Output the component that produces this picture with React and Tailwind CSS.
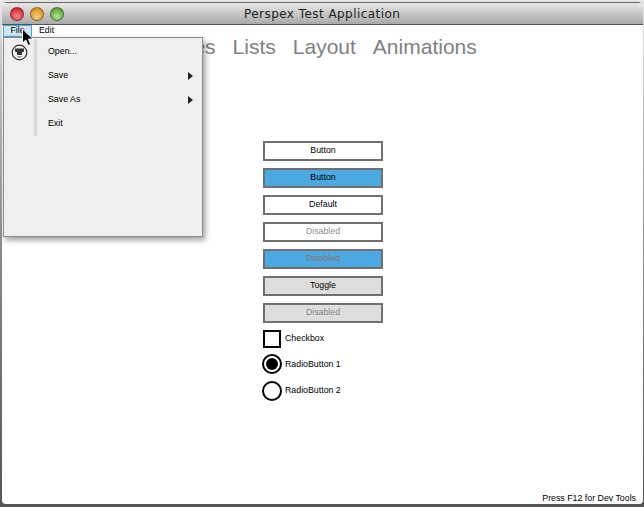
import React from 'react';

const sans = 'font-["Liberation_Sans",Arial,sans-serif]';

const tabs = [
  { label: 'Buttons' },
  { label: 'Text' },
  { label: 'Images' },
  { label: 'Lists' },
  { label: 'Layout' },
  { label: 'Animations' },
];

const buttons = [
  { label: 'Button', box: 'bg-white', text: 'text-black' },
  { label: 'Button', box: 'bg-[#4aa9e0]', text: 'text-black' },
  { label: 'Default', box: 'bg-white', text: 'text-black' },
  { label: 'Disabled', box: 'bg-white', text: 'text-[#8a8f96]' },
  { label: 'Disabled', box: 'bg-[#4aa9e0]', text: 'text-[#8f6f72]' },
  { label: 'Toggle', box: 'bg-[#dedede]', text: 'text-black' },
  { label: 'Disabled', box: 'bg-[#dedede]', text: 'text-[#80868c]' },
];

const menuItems = [
  { label: 'Open...' },
  { label: 'Save', sub: true },
  { label: 'Save As', sub: true },
  { label: 'Exit' },
];

function Light({ colour }) {
  return <span className={`block w-[14px] h-[14px] rounded-full border border-black/35 ${colour}`} />;
}

function Menu() {
  return (
    <div className="absolute left-[3px] top-[37px] w-[200px] h-[200px] bg-[#efefef] border border-[#8c8c8c] shadow-[2px_3px_6px_rgba(0,0,0,0.4)]">
      <div className="flex">
        <div className="w-[30px] flex justify-center pt-[6px]">
          <svg width="17" height="17" viewBox="0 0 17 17" fill="none">
            <circle cx="8.5" cy="8.5" r="7.3" stroke="#333" strokeWidth="1.2" />
            <path d="M4 4.5h9v3l-2 1v2.5h-5v-2.5l-2-1z" fill="#333" />
            <path d="M6.5 12.8h4" stroke="#666" strokeWidth="1" />
          </svg>
        </div>
        <div className="w-[3px] h-[97px] mt-[1px] bg-[#d9d9d9]" />
        <div className="flex-1 pt-[2px]">
          {menuItems.map((item) => (
            <div key={item.label} className="h-[24px] flex items-center justify-between pl-[11px] pr-[9px] text-[8.8px] text-black">
              <span>{item.label}</span>
              {item.sub && <span className="w-0 h-0 border-y-[4px] border-y-transparent border-l-[5px] border-l-[#222]" />}
            </div>
          ))}
        </div>
      </div>
    </div>
  );
}

export default function App() {
  return (
    <div className={`relative w-[644px] h-[507px] overflow-hidden bg-gradient-to-b from-[#e6e6e6] via-[#8a8a8a] to-[#555] ${sans}`}>
      <div className="flex flex-col h-[502px] mt-[2px] ml-[2px] mr-[1px] bg-white rounded-t-[5px] rounded-b-[4px] overflow-hidden">
        {/* barra de titulo */}
        <div className="h-[23px] shrink-0 flex items-center gap-[6px] pl-[8px] bg-gradient-to-b from-[#e8e8e8] to-[#a9a9a9] border-t border-[#666] border-b-[#555] border-b">
          <Light colour="bg-[radial-gradient(circle_at_50%_70%,#f58a8c,#d92f36_70%)]" />
          <Light colour="bg-[radial-gradient(circle_at_50%_70%,#f5cd80,#dd9426_70%)]" />
          <Light colour="bg-[radial-gradient(circle_at_50%_70%,#b6e09a,#62a83e_70%)]" />
          <span className='ml-[174px] pt-[1px] font-["DejaVu_Sans",sans-serif] text-[12px] tracking-[0.45px] text-[#222]'>Perspex Test Application</span>
        </div>

        {/* menu */}
        <div className="h-[12px] shrink-0 flex items-center text-[8.8px] text-black">
          <span className="w-[29px] h-[12px] ml-[1px] flex items-center justify-center bg-[#cfe6f5] border border-[#47a9e0]">File</span>
          <span className="ml-[7px]">Edit</span>
        </div>

        {/* pestanas */}
        <div className="h-[24px] shrink-0 mt-[-2px] pl-[1px] flex items-center gap-[17px] text-[21px] text-[#808080]">
          {tabs.map((tab) => (
            <span key={tab.label}>{tab.label}</span>
          ))}
        </div>

        <div className="flex flex-col items-start gap-[7px] ml-[261px] mt-[82px]">
          {buttons.map((b, i) => (
            <div key={i} className={`w-[120px] h-[20px] flex items-center justify-center border-2 border-[#707070] text-[8.8px] ${b.box} ${b.text}`}>
              {b.label}
            </div>
          ))}
          <div className="flex items-center gap-[4px] text-[8.8px] text-black">
            <span className="block w-[18px] h-[18px] border-2 border-black" />
            <span className="-mt-[1px]">Checkbox</span>
          </div>
          <div className="flex items-center gap-[3px] -ml-[1px] mt-[-1px] text-[8.8px] text-black">
            <span className="flex items-center justify-center w-[20px] h-[20px] rounded-full border-2 border-black">
              <span className="block w-[12px] h-[12px] rounded-full bg-black" />
            </span>
            <span className="mt-[1px]">RadioButton 1</span>
          </div>
          <div className="flex items-center gap-[3px] -ml-[1px] text-[8.8px] text-black">
            <span className="block w-[20px] h-[20px] rounded-full border-2 border-black" />
            <span>RadioButton 2</span>
          </div>
        </div>

        <div className="mt-auto h-[13px] pt-[2px] flex items-center justify-end pr-[7px] text-[8.8px] text-black">
          Press F12 for Dev Tools
        </div>
      </div>

      <Menu />

      {/* cursor */}
      <svg className="absolute left-[21px] top-[28px]" width="14" height="20" viewBox="0 0 14 20">
        <path d="M1.5 1v14l3.3-3 2.3 5.5 2.6-1.1-2.3-5.3h4.6z" fill="#000" stroke="#fff" strokeWidth="1" />
      </svg>
    </div>
  );
}
